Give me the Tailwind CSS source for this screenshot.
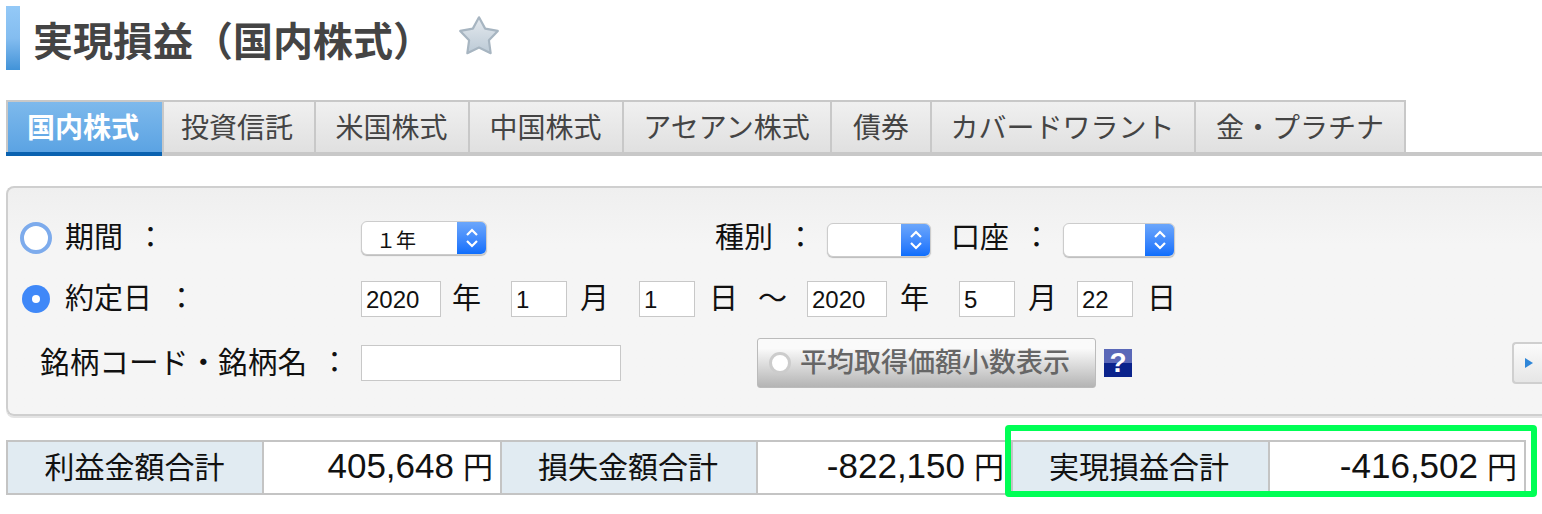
<!DOCTYPE html>
<html lang="ja">
  <head>
    <meta charset="UTF-8" />
    <title>実現損益（国内株式）</title>
    <script src="https://cdn.jsdelivr.net/npm/@tailwindcss/browser@4"></script>
  </head>
  <body class="bg-white w-[1542px] h-[514px] overflow-hidden relative text-[#111] font-['Noto_Sans_CJK_JP','Liberation_Sans',sans-serif]">
    <!-- Title -->
    <div class="flex items-start pt-[6px] pl-[6px] h-[100px]">
      <div class="w-[14px] h-[64px] bg-linear-to-b from-[#94c9f7] from-0% via-[#84bdf0] via-50% to-[#4193d8] to-100%"></div>
      <h1 class="ml-[13px] h-[64px] pt-[2px] flex items-center text-[40px] font-bold text-[#444] leading-none whitespace-nowrap">実現損益（国内株式）</h1>
      <svg class="ml-[24px] mt-[8px]" width="44" height="44" viewBox="0 0 40 40">
        <defs>
          <linearGradient id="star" x1="0" y1="0" x2="0" y2="1">
            <stop offset="0" stop-color="#e4e9ee" />
            <stop offset="1" stop-color="#bccad6" />
          </linearGradient>
        </defs>
        <path d="M20 3l5.600 10.300 11.500 2.100-8.100 8.500 1.600 11.700-10.600-5.100-10.600 5.100 1.600-11.700-8.100-8.500 11.500-2.100z" fill="url(#star)" stroke="#a7b5c1" stroke-width="2" stroke-linejoin="round" />
      </svg>
    </div>

    <!-- Tabs -->
    <div class="flex h-[56px] ml-[6px] border-b-[4px] border-[#c8c8c8] text-[28px] leading-none">
      <div class="w-[156px] flex-none flex items-center justify-center pb-[2px] pr-[4px] font-bold text-white border-t-2 border-l-2 border-[#c8c8c8] bg-linear-to-b from-[#7db9ec] to-[#5ba3e3] shadow-[0_4px_0_#0a62b0]">国内株式</div>
      <div class="w-[154px] flex-none flex items-center justify-center pb-[2px] pr-[4px] text-[#444] border-t-2 border-x-2 border-[#c8c8c8] bg-linear-to-b from-[#f0f0f0] to-[#e0e0e0]">投資信託</div>
      <div class="w-[154px] flex-none flex items-center justify-center pb-[2px] pr-[1px] text-[#444] border-t-2 border-r-2 border-[#c8c8c8] bg-linear-to-b from-[#f0f0f0] to-[#e0e0e0]">米国株式</div>
      <div class="w-[154px] flex-none flex items-center justify-center pb-[2px] pr-[1px] text-[#444] border-t-2 border-r-2 border-[#c8c8c8] bg-linear-to-b from-[#f0f0f0] to-[#e0e0e0]">中国株式</div>
      <div class="w-[208px] flex-none flex items-center justify-center pb-[2px] pr-[1px] text-[#444] border-t-2 border-r-2 border-[#c8c8c8] bg-linear-to-b from-[#f0f0f0] to-[#e0e0e0]">アセアン株式</div>
      <div class="w-[100px] flex-none flex items-center justify-center pb-[2px] text-[#444] border-t-2 border-r-2 border-[#c8c8c8] bg-linear-to-b from-[#f0f0f0] to-[#e0e0e0]">債券</div>
      <div class="w-[264px] flex-none flex items-center justify-center pb-[2px] pr-[1px] text-[#444] border-t-2 border-r-2 border-[#c8c8c8] bg-linear-to-b from-[#f0f0f0] to-[#e0e0e0]">カバードワラント</div>
      <div class="w-[210px] flex-none flex items-center justify-center pb-[2px] text-[#444] border-t-2 border-r-2 border-[#c8c8c8] bg-linear-to-b from-[#f0f0f0] to-[#e0e0e0]">金・プラチナ</div>
    </div>

    <!-- Search panel -->
    <div class="mt-[30px] ml-[6px] h-[230px] rounded-l-[8px] border-y-2 border-l-2 border-[#cfcfcf] bg-linear-to-b from-[#efefef] from-0% to-[#f5f5f5] to-25% text-[29px] leading-none relative shadow-[0_2px_0_#e4e4e4]">
      <!-- row 1 -->
      <div class="flex items-center h-[36px] mt-[32px]">
        <span class="ml-[12px] w-[32px] h-[32px] flex-none rounded-full bg-white border-[4px] border-[#7dabec]"></span>
        <span class="ml-[13px] w-[58px] flex-none pb-[5px]">期間</span>
        <span class="ml-[13px] w-[225px] flex-none pb-[5px]">：</span>
        <div class="w-[126px] h-[34px] flex-none flex rounded-[6px] bg-white border border-[#ccc] shadow-[0_1px_1px_#bbb] overflow-hidden">
          <span class="flex-1 pl-[14px] pt-[8px] text-[20px]">１年</span>
          <span class="w-[29px] flex items-center justify-center bg-linear-to-b from-[#6ba6fb] to-[#0d6efc]">
            <svg width="14" height="24" viewBox="0 0 14 24" fill="none" stroke="white" stroke-width="2.200"><path d="M2 9l5-5 5 5M2 15l5 5 5-5" /></svg>
          </span>
        </div>
        <span class="ml-[228px] w-[58px] flex-none pb-[5px]">種別</span>
        <span class="ml-[13px] w-[41px] flex-none pb-[5px]">：</span>
        <div class="mt-[4px] w-[104px] h-[34px] flex-none flex rounded-[6px] bg-white border border-[#ccc] shadow-[0_1px_1px_#bbb] overflow-hidden">
          <span class="flex-1"></span>
          <span class="w-[29px] flex items-center justify-center bg-linear-to-b from-[#6ba6fb] to-[#0d6efc]">
            <svg width="14" height="24" viewBox="0 0 14 24" fill="none" stroke="white" stroke-width="2.200"><path d="M2 9l5-5 5 5M2 15l5 5 5-5" /></svg>
          </span>
        </div>
        <span class="ml-[20px] w-[58px] flex-none pb-[5px]">口座</span>
        <span class="ml-[13px] w-[41px] flex-none pb-[5px]">：</span>
        <div class="mt-[4px] w-[112px] h-[34px] flex-none flex rounded-[6px] bg-white border border-[#ccc] shadow-[0_1px_1px_#bbb] overflow-hidden">
          <span class="flex-1"></span>
          <span class="w-[29px] flex items-center justify-center bg-linear-to-b from-[#6ba6fb] to-[#0d6efc]">
            <svg width="14" height="24" viewBox="0 0 14 24" fill="none" stroke="white" stroke-width="2.200"><path d="M2 9l5-5 5 5M2 15l5 5 5-5" /></svg>
          </span>
        </div>
      </div>

      <!-- row 2 -->
      <div class="flex items-center h-[36px] mt-[25px]">
        <span class="ml-[14px] w-[28px] h-[28px] flex-none rounded-full bg-[#3f88f8] flex items-center justify-center">
          <span class="w-[8px] h-[8px] rounded-full bg-white"></span>
        </span>
        <span class="ml-[15px] w-[87px] flex-none pb-[5px]">約定日</span>
        <span class="ml-[15px] w-[194px] flex-none pb-[5px]">：</span>
        <span class="w-[80px] h-[36px] flex-none border border-[#c8c8c8] bg-white pl-[4px] pt-[2px] flex items-center text-[24px] font-['Liberation_Sans']">2020</span>
        <span class="ml-[11px] w-[59px] flex-none pb-[5px]">年</span>
        <span class="w-[56px] h-[36px] flex-none border border-[#c8c8c8] bg-white pl-[4px] pt-[2px] flex items-center text-[24px] font-['Liberation_Sans']">1</span>
        <span class="ml-[13px] w-[59px] flex-none pb-[5px]">月</span>
        <span class="w-[56px] h-[36px] flex-none border border-[#c8c8c8] bg-white pl-[4px] pt-[2px] flex items-center text-[24px] font-['Liberation_Sans']">1</span>
        <span class="ml-[14px] w-[49px] flex-none pb-[5px]">日</span>
        <span class="w-[49px] flex-none pb-[5px]">～</span>
        <span class="w-[80px] h-[36px] flex-none border border-[#c8c8c8] bg-white pl-[4px] pt-[2px] flex items-center text-[24px] font-['Liberation_Sans']">2020</span>
        <span class="ml-[13px] w-[59px] flex-none pb-[5px]">年</span>
        <span class="w-[56px] h-[36px] flex-none border border-[#c8c8c8] bg-white pl-[4px] pt-[2px] flex items-center text-[24px] font-['Liberation_Sans']">5</span>
        <span class="ml-[13px] w-[49px] flex-none pb-[5px]">月</span>
        <span class="w-[56px] h-[36px] flex-none border border-[#c8c8c8] bg-white pl-[4px] pt-[2px] flex items-center text-[24px] font-['Liberation_Sans']">22</span>
        <span class="ml-[14px] flex-none pb-[5px]">日</span>
      </div>

      <!-- row 3 -->
      <div class="flex items-center h-[50px] mt-[21px]">
        <span class="ml-[32px] w-[270px] flex-none whitespace-nowrap text-[29.700px] pb-[5px]">銘柄コード・銘柄名</span>
        <span class="ml-[10px] w-[41px] flex-none pb-[5px]">：</span>
        <span class="w-[260px] h-[36px] flex-none border border-[#c8c8c8] bg-white"></span>
        <div class="ml-[136px] w-[339px] h-[50px] flex-none flex items-center rounded-[3px] border border-[#bbb] bg-linear-to-b from-[#fafafa] from-20% to-[#b4b4b4] text-[#666] font-medium text-[27px]">
          <span class="ml-[11px] w-[22px] h-[22px] flex-none rounded-full bg-white border-[3px] border-[#ccc]"></span>
          <span class="ml-[9px] pb-[5px] whitespace-nowrap">平均取得価額小数表示</span>
        </div>
        <div class="ml-[8px] w-[28px] h-[28px] flex-none flex items-center justify-center bg-linear-to-b from-[#5a68b8] from-50% to-[#0b238c] to-50% text-white font-bold text-[28px] font-['Liberation_Sans']">?</div>
        <div class="ml-[380px] w-[30px] h-[42px] flex-none flex items-center pl-[10px] rounded-l-[4px] border-y-2 border-l-2 border-[#cfcfcf] bg-linear-to-b from-[#fbfbfb] to-[#e6e6e6]">
          <svg width="10" height="12" viewBox="0 0 10 12"><path d="M1 1l8 5-8 5z" fill="#2e86d8" /></svg>
        </div>
      </div>
    </div>

    <!-- Summary table -->
    <div class="mt-[24px] ml-[6px] w-[1520px] h-[55px] flex border-2 border-[#c4c4c4] text-[30px] leading-none">
      <div class="w-[256px] flex-none flex items-center justify-center pb-[5px] pr-[1px] bg-[#e1ebf2] border-r-2 border-[#c4c4c4]">利益金額合計</div>
      <div class="w-[238px] flex-none flex items-center justify-end pb-[5px] pr-[7px] bg-white border-r-2 border-[#c4c4c4]"><span class="font-['Liberation_Sans'] text-[35px] mr-[9px]">405,648</span>円</div>
      <div class="w-[256px] flex-none flex items-center justify-center pb-[5px] pr-[2px] bg-[#e1ebf2] border-r-2 border-[#c4c4c4]">損失金額合計</div>
      <div class="w-[255px] flex-none flex items-center justify-end pb-[5px] pr-[7px] bg-white border-r-2 border-[#c4c4c4]"><span class="font-['Liberation_Sans'] text-[35px] mr-[9px]">-822,150</span>円</div>
      <div class="w-[257px] flex-none flex items-center justify-center pb-[5px] pr-[3px] bg-[#e1ebf2] border-r-2 border-[#c4c4c4]">実現損益合計</div>
      <div class="flex-1 flex items-center justify-end pb-[5px] pr-[7px] bg-white"><span class="font-['Liberation_Sans'] text-[35px] mr-[9px]">-416,502</span>円</div>
    </div>

    <!-- Highlight -->
    <div class="absolute left-[1005px] top-[425px] w-[532px] h-[72px] border-[6px] border-[#00ff55] rounded-[4px]"></div>
  </body>
</html>
